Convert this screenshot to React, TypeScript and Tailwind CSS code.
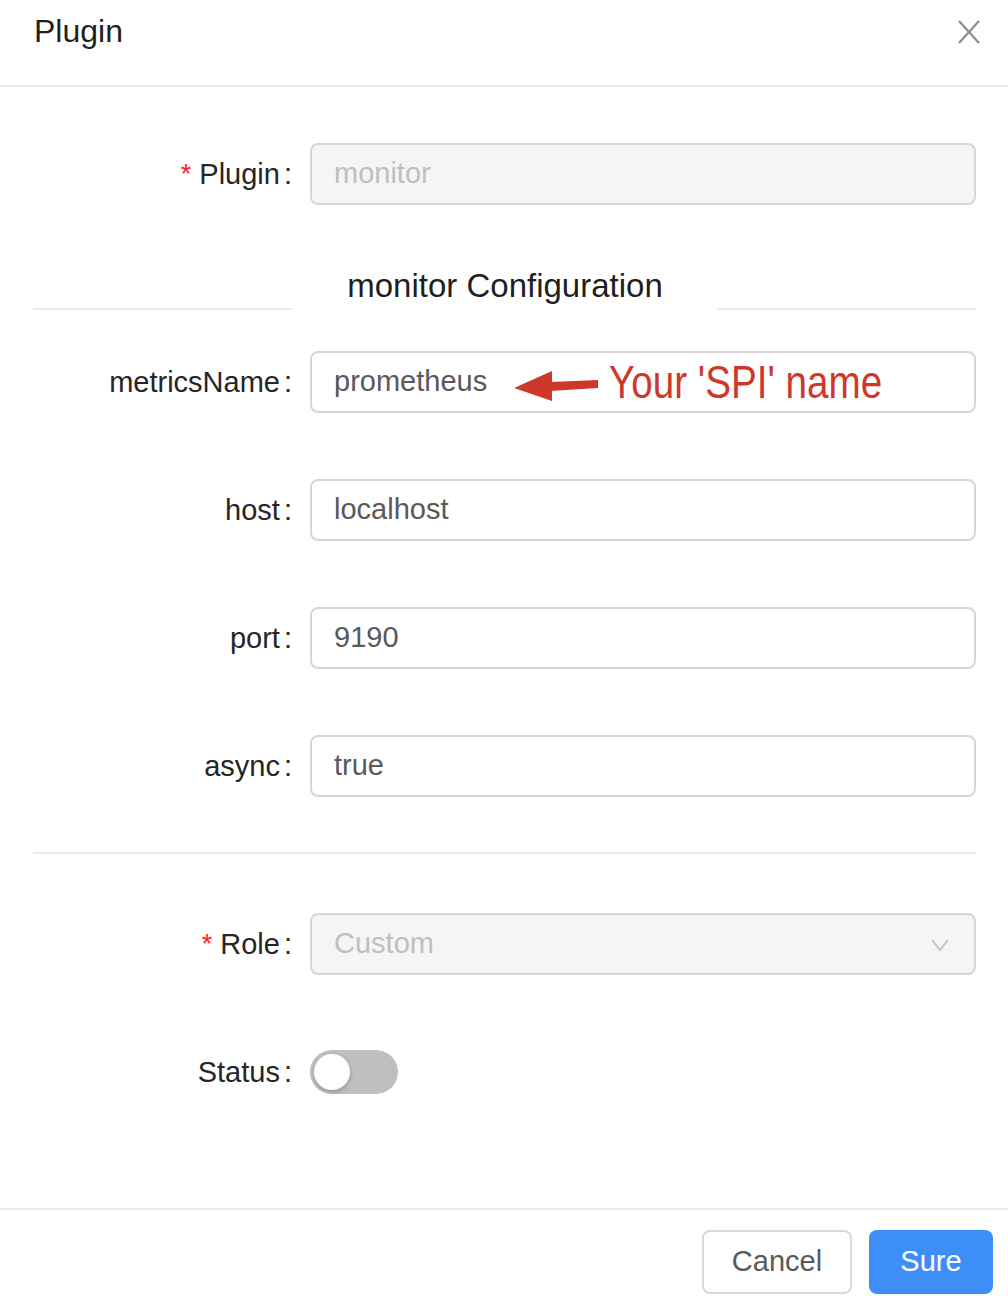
import React from "react";

const font = { fontFamily: '"Liberation Sans", Arial, sans-serif' };

function Label({ text, required }: { text: string; required?: boolean }) {
  return (
    <div className="w-[277px] shrink-0 flex items-center justify-end pr-[18px] text-[29px] leading-[40px] text-[#262626]">
      {required && <span className="text-[#f5222d] mr-[8px] text-[27px]">*</span>}
      <span>{text}</span>
      <span className="ml-[4px]">:</span>
    </div>
  );
}

function Input({ value, disabled, children }: { value: string; disabled?: boolean; children?: React.ReactNode }) {
  return (
    <div
      className={`relative flex-1 h-[62px] rounded-[8px] border-2 border-[#d6d6d6] flex items-center pl-[22px] text-[29px] ${
        disabled ? "bg-[#f5f5f5] text-[#bfbfbf]" : "bg-white text-[#595959]"
      }`}
    >
      <span>{value}</span>
      {children}
    </div>
  );
}

function Row({ label, required, children, className }: { label: string; required?: boolean; children: React.ReactNode; className?: string }) {
  return (
    <div className={`flex items-center ${className ?? ""}`}>
      <Label text={label} required={required} />
      {children}
    </div>
  );
}

export default function App() {
  return (
    <div className="w-[1008px] h-[1296px] bg-white overflow-hidden flex flex-col" style={font}>
      {/* Header */}
      <div className="relative h-[87px] border-b-2 border-[#e8e8e8] shrink-0">
        <div className="absolute left-[34px] top-[11px] text-[32px] leading-[40px] text-[#1f1f1f]">Plugin</div>
        <svg className="absolute left-[957px] top-[20px]" width="24" height="24" viewBox="0 0 24 24">
          <path d="M2 1 L22 23 M22 1 L2 23" stroke="#8c8c8c" strokeWidth="2.2" fill="none" />
        </svg>
      </div>

      {/* Body */}
      <div className="flex-1 pl-[33px] pr-[32px] pt-[56px] flex flex-col">
        <Row label="Plugin" required>
          <Input value="monitor" disabled />
        </Row>

        <div className="mt-[61px] h-[44px] flex items-end">
          <div className="w-[259px] h-[2px] bg-[#e8e8e8]" />
          <div className="flex-1 self-start text-center text-[33px] leading-[40px] text-[#1f1f1f]">monitor Configuration</div>
          <div className="w-[258px] h-[2px] bg-[#e8e8e8]" />
        </div>

        <Row label="metricsName" className="mt-[41px]">
          <Input value="prometheus">
            <svg className="absolute left-[202px] top-[17px]" width="86" height="34" viewBox="0 0 86 34">
              <path d="M0 18 L38 1 L38 31 Z" fill="#d0372b" />
              <path d="M36 12 L84 10 L84 18 L36 21 Z" fill="#d0372b" />
            </svg>
            <span
              className="absolute left-[297px] top-[2px] text-[46px] leading-[54px] text-[#d0372b] inline-block origin-left scale-x-[0.84] whitespace-nowrap"
            >
              Your 'SPI' name
            </span>
          </Input>
        </Row>

        <Row label="host" className="mt-[66px]">
          <Input value="localhost" />
        </Row>

        <Row label="port" className="mt-[66px]">
          <Input value="9190" />
        </Row>

        <Row label="async" className="mt-[66px]">
          <Input value="true" />
        </Row>

        <div className="mt-[55px] h-[2px] bg-[#e8e8e8]" />

        <Row label="Role" required className="mt-[59px]">
          <Input value="Custom" disabled>
            <svg className="absolute right-[25px] top-[24px]" width="18" height="12" viewBox="0 0 18 12">
              <path d="M1 1 L9 11 L17 1" stroke="#bfbfbf" strokeWidth="1.8" fill="none" />
            </svg>
          </Input>
        </Row>

        <Row label="Status" className="mt-[75px]">
          <div className="w-[88px] h-[44px] rounded-full bg-[#bfbfbf] flex items-center px-[4px]">
            <div className="w-[36px] h-[36px] rounded-full bg-white shadow-[0_2px_4px_rgba(0,35,11,0.25)]" />
          </div>
        </Row>
      </div>

      {/* Footer */}
      <div className="h-[88px] shrink-0 border-t-2 border-[#e8e8e8] flex items-start justify-end pt-[20px] pr-[15px] gap-[17px]">
        <button className="w-[150px] h-[64px] rounded-[8px] border-2 border-[#d9d9d9] bg-white text-[29px] text-[#595959]">
          Cancel
        </button>
        <button className="w-[124px] h-[64px] rounded-[8px] bg-[#3e8ef7] text-[29px] text-white">Sure</button>
      </div>
    </div>
  );
}
